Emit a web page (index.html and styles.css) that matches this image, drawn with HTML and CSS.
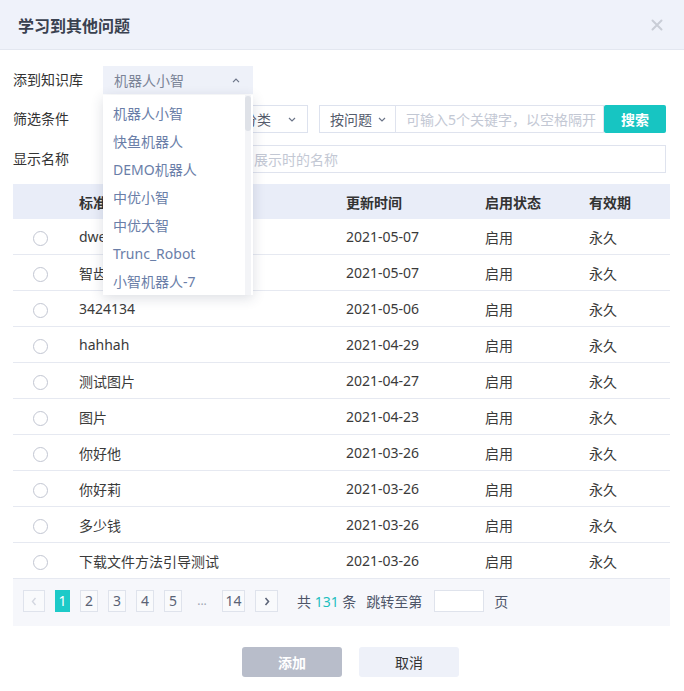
FILE: index.html
```html
<!DOCTYPE html>
<html lang="zh">
<head>
<meta charset="utf-8">
<link rel="stylesheet" href="styles.css">
</head>
<body>
<div class="dialog">
  <div class="dlg-head">
    <span class="dlg-title">学习到其他问题</span>
    <svg class="close" width="12" height="12" viewBox="0 0 12 12"><path d="M1.5 1.5L10.5 10.5M10.5 1.5L1.5 10.5" stroke="#c9cdd6" stroke-width="2" stroke-linecap="round"/></svg>
  </div>
  <div class="dlg-body">
    <div class="form-row row1">
      <label class="lbl">添到知识库</label>
      <div class="select-wrap">
        <div class="select sel-kb">
          <span>机器人小智</span>
          <svg width="8" height="5" viewBox="0 0 8 5"><path d="M1 4.2L4 1.2L7 4.2" fill="none" stroke="#6b7488" stroke-width="1.2"/></svg>
        </div>
        <div class="dropdown">
          <ul class="dd-list">
            <li>机器人小智</li>
            <li>快鱼机器人</li>
            <li>DEMO机器人</li>
            <li>中优小智</li>
            <li>中优大智</li>
            <li>Trunc_Robot</li>
            <li>小智机器人-7</li>
          </ul>
          <div class="dd-scroll"><div class="dd-thumb"></div></div>
        </div>
      </div>
    </div>
    <div class="form-row row2">
      <label class="lbl">筛选条件</label>
      <div class="select sel-a"><span></span>
        <svg width="8" height="5" viewBox="0 0 8 5"><path d="M1 1L4 4L7 1" fill="none" stroke="#6b7488" stroke-width="1.2"/></svg>
      </div>
      <div class="select sel-b"><span class="sel-b-text">分类</span>
        <svg width="8" height="5" viewBox="0 0 8 5"><path d="M1 1L4 4L7 1" fill="none" stroke="#6b7488" stroke-width="1.2"/></svg>
      </div>
      <div class="select sel-c"><span>按问题</span>
        <svg width="8" height="5" viewBox="0 0 8 5"><path d="M1 1L4 4L7 1" fill="none" stroke="#6b7488" stroke-width="1.2"/></svg>
      </div>
      <div class="input kw"><span class="ph">可输入5个关键字，以空格隔开</span></div>
      <button class="btn-search">搜索</button>
    </div>
    <div class="form-row row3">
      <label class="lbl">显示名称</label>
      <div class="input name"><span class="ph ph-name">展示时的名称</span></div>
    </div>

    <div class="table">
      <div class="tr th">
        <div></div><div>标准问题</div><div>更新时间</div><div>启用状态</div><div>有效期</div>
      </div>
      <div class="tr"><div><i class="radio"></i></div><div>dwe</div><div>2021-05-07</div><div>启用</div><div>永久</div></div>
      <div class="tr"><div><i class="radio"></i></div><div>智齿</div><div>2021-05-07</div><div>启用</div><div>永久</div></div>
      <div class="tr"><div><i class="radio"></i></div><div>3424134</div><div>2021-05-06</div><div>启用</div><div>永久</div></div>
      <div class="tr"><div><i class="radio"></i></div><div>hahhah</div><div>2021-04-29</div><div>启用</div><div>永久</div></div>
      <div class="tr"><div><i class="radio"></i></div><div>测试图片</div><div>2021-04-27</div><div>启用</div><div>永久</div></div>
      <div class="tr"><div><i class="radio"></i></div><div>图片</div><div>2021-04-23</div><div>启用</div><div>永久</div></div>
      <div class="tr"><div><i class="radio"></i></div><div>你好他</div><div>2021-03-26</div><div>启用</div><div>永久</div></div>
      <div class="tr"><div><i class="radio"></i></div><div>你好莉</div><div>2021-03-26</div><div>启用</div><div>永久</div></div>
      <div class="tr"><div><i class="radio"></i></div><div>多少钱</div><div>2021-03-26</div><div>启用</div><div>永久</div></div>
      <div class="tr"><div><i class="radio"></i></div><div>下载文件方法引导测试</div><div>2021-03-26</div><div>启用</div><div>永久</div></div>
      <div class="pager">
        <span class="pg prev"><svg width="6" height="9" viewBox="0 0 6 9"><path d="M4.5 1L1.5 4.5L4.5 8" fill="none" stroke="#d3d7e0" stroke-width="1.4"/></svg></span>
        <span class="pg active">1</span>
        <span class="pg">2</span>
        <span class="pg">3</span>
        <span class="pg">4</span>
        <span class="pg">5</span>
        <span class="pg dots">...</span>
        <span class="pg wide">14</span>
        <span class="pg next"><svg width="6" height="9" viewBox="0 0 6 9"><path d="M1.5 1L4.5 4.5L1.5 8" fill="none" stroke="#5d6579" stroke-width="1.6"/></svg></span>
        <span class="total">共 <em>131</em> 条</span>
        <span class="jump">跳转至第</span>
        <span class="jump-input"></span>
        <span class="page-unit">页</span>
      </div>
    </div>

    <div class="footer">
      <button class="btn btn-add">添加</button>
      <button class="btn btn-cancel">取消</button>
    </div>
  </div>
</div>
</body>
</html>
```

FILE: styles.css
```css
* { box-sizing: border-box; }
body {
  margin: 0;
  background: #fff;
  font-family: "Noto Sans", "Noto Sans CJK SC", sans-serif;
  font-size: 14px;
  color: #333;
}
.dialog { width: 684px; height: 691px; overflow: hidden; }
.dlg-head {
  height: 50px;
  background: #eff2fa;
  border-bottom: 1px solid #e3e7f0;
  display: flex;
  align-items: center;
  justify-content: space-between;
  padding: 0 21px 0 18px;
}
.dlg-title { font-size: 16px; font-weight: 600; color: #3a4150; }
.close { display: block; }

.dlg-body { padding: 16px 0 0 13px; }
.form-row { display: flex; align-items: center; height: 28px; }
.row2 { margin-top: 11px; }
.row3 { margin-top: 12px; }
.lbl { width: 90px; flex: none; color: #333; line-height: 28px; }

.select {
  height: 28px;
  display: flex;
  align-items: center;
  justify-content: space-between;
  padding: 0 11px 0 10px;
  border: 1px solid #dde2ee;
  background: #fff;
  color: #555c6c;
  white-space: nowrap;
}
.select svg { flex: none; }
.select-wrap { position: relative; }
.sel-kb {
  width: 150px;
  background: #eef1f9;
  border-color: #eef1f9;
  color: #7b8497;
  padding-right: 12px;
}
.sel-a { width: 96px; }
.sel-b { width: 104px; margin-left: 5px; padding-left: 32px; }
.sel-b-text { margin-left: 6px; }
.sel-c { width: 77px; margin-left: 11px; justify-content: flex-start; gap: 6px; }
.input {
  height: 28px;
  border: 1px solid #dfe3ee;
  display: flex;
  align-items: center;
  padding: 0 4px 0 10px;
  background: #fff;
}
.ph { color: #c3c8d4; white-space: nowrap; }
.ph-name { margin-left: 140px; }
.kw { width: 209px; margin-left: -1px; }
.btn-search {
  width: 62px;
  height: 28px;
  border: none;
  border-radius: 2px;
  background: #17c5c2;
  color: #fff;
  font-family: inherit;
  font-size: 14px;
  font-weight: 600;
  padding: 0;
}
.name { width: 563px; }

.dropdown {
  position: absolute;
  left: 0;
  top: 29px;
  width: 150px;
  height: 200px;
  background: #fff;
  box-shadow: 0 3px 12px rgba(40, 50, 80, 0.16);
  overflow: hidden;
  z-index: 5;
}
.dd-list { list-style: none; margin: 0; padding: 5px 0 0; }
.dd-list li {
  height: 28px;
  line-height: 28px;
  padding-left: 10px;
  color: #6a7ea8;
  white-space: nowrap;
}
.dd-scroll {
  position: absolute;
  right: 2px;
  top: 0;
  width: 6px;
  height: 100%;
  background: #f3f4f7;
}
.dd-thumb { width: 6px; height: 35px; margin-top: 1px; border-radius: 3px; background: #dfe2e8; }

.table { margin-top: 11px; width: 657px; }
.tr {
  display: grid;
  grid-template-columns: 66px 267px 139px 104px 1fr;
  height: 36px;
  align-items: center;
  border-bottom: 1px solid #e6e9f1;
  color: #3a3a3a;
}
.tr > div { white-space: nowrap; }
.th {
  height: 35px;
  background: #e9edf8;
  border-bottom: none;
  font-weight: 600;
  color: #333;
}
.radio {
  display: block;
  width: 15px;
  height: 15px;
  margin: 4px 0 0 20px;
  border: 1px solid #c2c6d2;
  border-radius: 50%;
  background: #fff;
}

.pager {
  height: 47px;
  background: #f6f7fb;
  display: flex;
  align-items: center;
  padding: 0 0 3px 10px;
  color: #5a6275;
}
.pg {
  height: 22px;
  min-width: 18px;
  border: 1px solid #dfe3ec;
  background: #f9fafc;
  display: flex;
  align-items: center;
  justify-content: center;
  margin-right: 10px;
  line-height: 1;
}
.prev { width: 22px; }
.active { width: 15px; min-width: 15px; background: #1dcac8; border-color: #1dcac8; color: #fff; }
.dots { width: 20px; border-color: transparent; background: transparent; color: #a0a6b3; font-size: 12px; }
.wide { width: 23px; }
.next { width: 23px; }
.total { margin-left: 9px; color: #4d5568; }
.total em { font-style: normal; color: #1dbfbe; }
.jump { margin-left: 10px; color: #4d5568; }
.jump-input {
  width: 50px;
  height: 22px;
  margin-left: 12px;
  border: 1px solid #dfe3ec;
  background: #fff;
}
.page-unit { margin-left: 10px; color: #4d5568; }

.footer {
  display: flex;
  justify-content: center;
  gap: 17px;
  margin-top: 21px;
  padding-left: 4px;
}
.btn {
  width: 100px;
  height: 30px;
  border: none;
  border-radius: 3px;
  font-family: inherit;
  font-size: 14px;
  padding: 0;
}
.btn-add { background: #b8bdca; color: #fff; font-weight: 600; }
.btn-cancel { background: #eef1f9; color: #333; }
```
